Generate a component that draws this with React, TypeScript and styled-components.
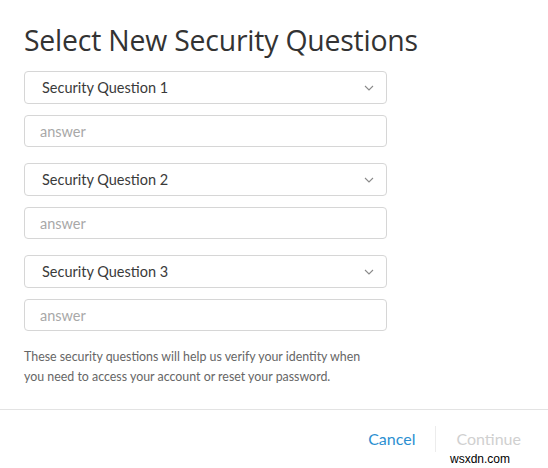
import React from "react"
import styled, { createGlobalStyle } from "styled-components"

const GlobalStyle = createGlobalStyle`
  html, body {
    margin: 0;
    padding: 0;
    background: #fff;
  }
  body {
    font-family: Lato, "Open Sans", sans-serif;
  }
`

const Modal = styled.div`
  position: relative;
  width: 548px;
  height: 468px;
  background: #fff;
  display: flex;
  flex-direction: column;
  box-sizing: border-box;
`

const Body = styled.div`
  padding: 22px 24px 0 24px;
  flex: 1;
`

const Title = styled.h1`
  margin: 0 0 13px 0;
  font-family: "Open Sans", Lato, sans-serif;
  font-size: 28.4px;
  font-weight: 400;
  color: #333;
  line-height: 36px;
  letter-spacing: -0.2px;
`

const Group = styled.div`
  display: flex;
  flex-direction: column;
  gap: 11px;
  width: 363px;
  margin-bottom: 16px;
`

const Field = styled.div<{ $select?: boolean }>`
  box-sizing: border-box;
  height: ${p => (p.$select ? "33px" : "32px")};
  border: 1px solid #d6d6d6;
  border-radius: 4px;
  display: flex;
  align-items: center;
  justify-content: space-between;
  padding: 0 12px 0 ${p => (p.$select ? "17px" : "15px")};
  font-size: 14.5px;
  color: ${p => (p.$select ? "#3a3a3a" : "#a8a8a8")};
`

const Chevron = () => (
  <svg width="10" height="6" viewBox="0 0 10 6">
    <path d="M1 1l4 4 4-4" fill="none" stroke="#8a8a8a" strokeWidth="1.1" />
  </svg>
)

const Help = styled.p`
  margin: 0;
  font-size: 12.4px;
  line-height: 20px;
  color: #666;
  width: 345px;
`

const Footer = styled.div`
  border-top: 1px solid #e3e3e3;
  height: 58px;
  display: flex;
  align-items: center;
  justify-content: flex-end;
  padding-right: 7px;
`

const Button = styled.span<{ $disabled?: boolean }>`
  font-size: 16px;
  color: ${p => (p.$disabled ? "#d0d0d0" : "#2c8fd1")};
  padding: 0 20px;
  line-height: 26px;
`

const Divider = styled.span`
  width: 1px;
  height: 26px;
  background: #ececec;
`

const Watermark = styled.span`
  position: absolute;
  right: 36px;
  bottom: 2px;
  font-family: "Liberation Sans", sans-serif;
  font-size: 12px;
  color: #000;
  background: #fff;
  padding: 0 2px;
`

const questions = [1, 2, 3]

export default function App() {
  return (
    <>
      <GlobalStyle />
      <Modal>
        <Body>
          <Title>Select New Security Questions</Title>
          {questions.map(n => (
            <Group key={n}>
              <Field $select>
                Security Question {n}
                <Chevron />
              </Field>
              <Field>answer</Field>
            </Group>
          ))}
          <Help>
            These security questions will help us verify your identity when
            you need to access your account or reset your password.
          </Help>
        </Body>
        <Footer>
          <Button>Cancel</Button>
          <Divider />
          <Button $disabled>Continue</Button>
        </Footer>
        <Watermark>wsxdn.com</Watermark>
      </Modal>
    </>
  )
}
